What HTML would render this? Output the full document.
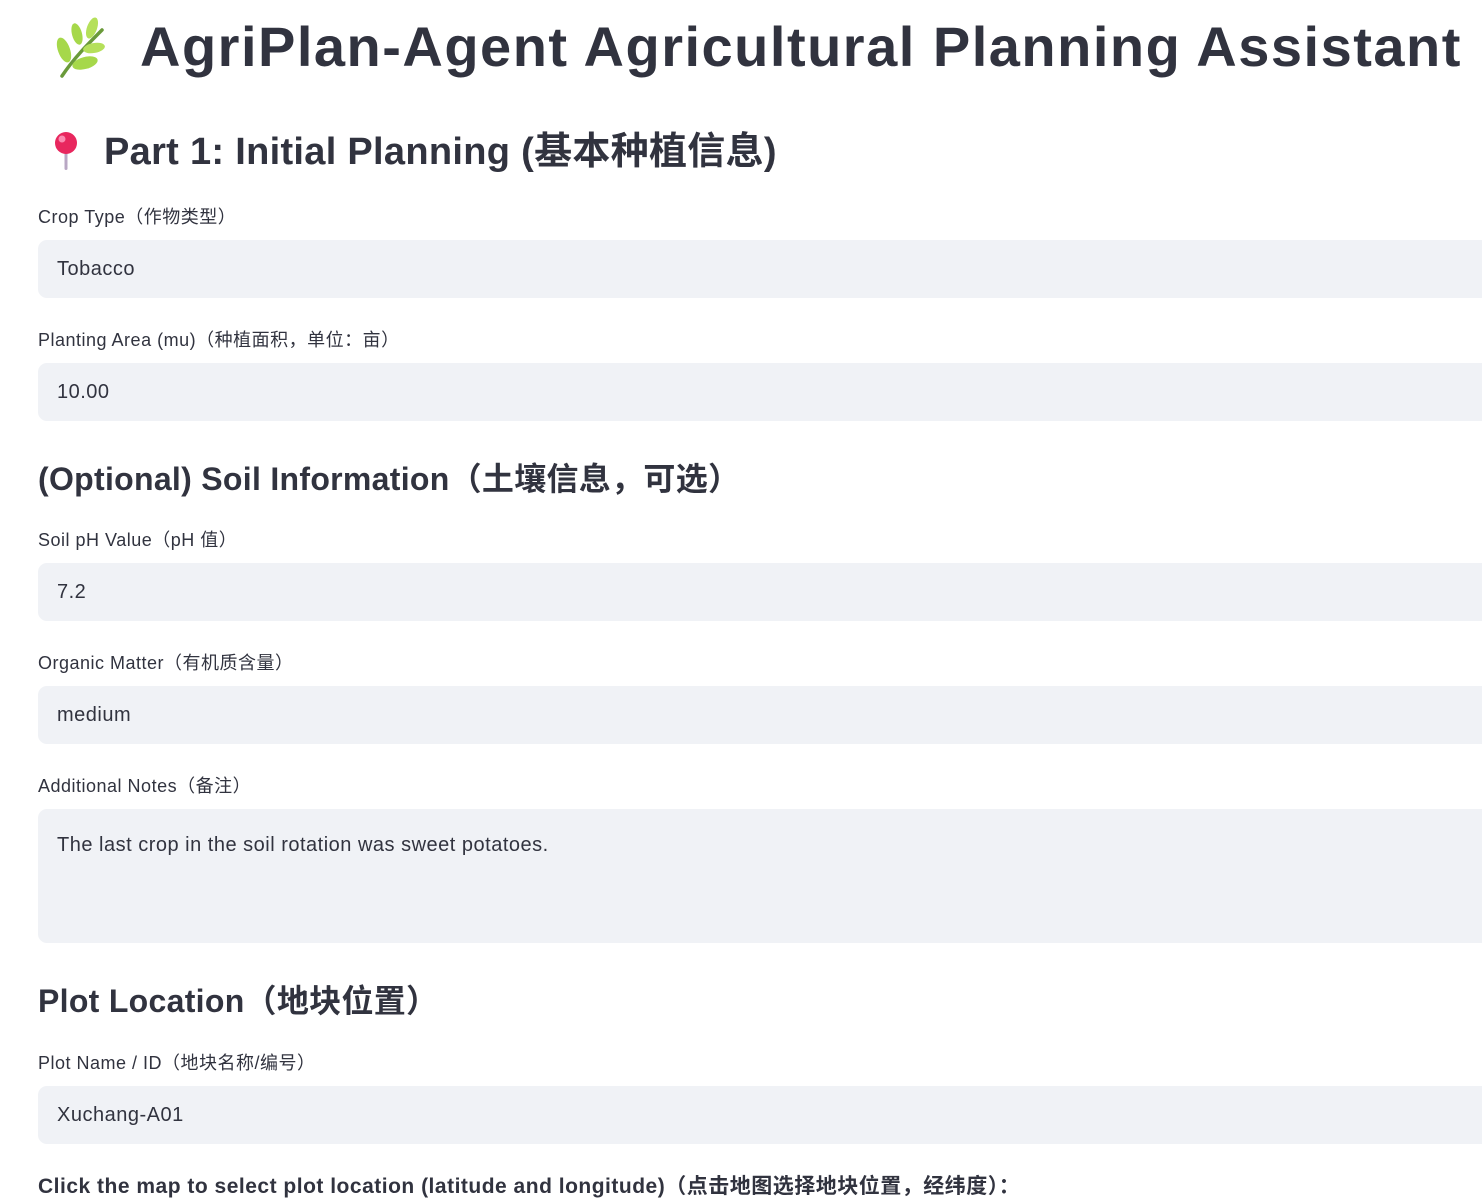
<!DOCTYPE html>
<html><head><meta charset="utf-8">
<style>
html,body{margin:0;padding:0;background:#fff;width:1482px;height:1200px;overflow:hidden;position:relative}
body{font-family:"Liberation Sans","Noto Sans CJK SC",sans-serif;color:#31333f}
.a{position:absolute;white-space:nowrap}
.t{left:140px;top:12px;font-size:56px;font-weight:bold;letter-spacing:1.5px;line-height:70px}
.h2{left:104px;top:127px;font-size:38px;font-weight:bold;line-height:50px;letter-spacing:0.3px}
.h3{left:38px;font-size:32px;font-weight:bold;line-height:40px;letter-spacing:0.3px}
.lb{left:38px;font-size:18px;line-height:24px;color:#31333f;letter-spacing:0.5px}
.in{left:38px;width:1460px;height:58px;background:#f0f2f6;border-radius:9px}
.in span{position:absolute;left:19px;top:17px;font-size:20px;line-height:24px;letter-spacing:0.5px}
.bt{left:38px;top:1173px;font-size:21px;font-weight:bold;line-height:28px;letter-spacing:0.5px}
</style></head><body>
<svg class="a" style="left:52px;top:14px" width="56" height="64" viewBox="0 0 56 64">
<path d="M10 62 C22 44 36 30 50 16" stroke="#6a9a3a" stroke-width="3.5" fill="none" stroke-linecap="round"/>
<ellipse cx="12" cy="36" rx="6" ry="13" transform="rotate(-20 12 36)" fill="#a6d84a"/>
<ellipse cx="25" cy="20" rx="5" ry="11" transform="rotate(-15 25 20)" fill="#a6d84a"/>
<ellipse cx="40" cy="14" rx="5" ry="11" transform="rotate(20 40 14)" fill="#b5e05a"/>
<ellipse cx="42" cy="34" rx="11" ry="5" transform="rotate(-10 42 34)" fill="#b5e05a"/>
<ellipse cx="33" cy="49" rx="13" ry="6" transform="rotate(-15 33 49)" fill="#a6d84a"/>
</svg>
<div class="a t">AgriPlan-Agent Agricultural Planning Assistant</div>
<svg class="a" style="left:50px;top:130px" width="32" height="42" viewBox="0 0 32 42">
<rect x="14.5" y="18" width="3" height="22" rx="1.5" fill="#b9a7c4"/>
<circle cx="16" cy="13" r="11" fill="#e8275e"/>
<circle cx="12" cy="9" r="3.5" fill="#fb8ab0"/>
</svg>
<div class="a h2">Part 1: Initial Planning (基本种植信息)</div>

<div class="a lb" style="top:205px">Crop Type（作物类型）</div>
<div class="a in" style="top:240px"><span>Tobacco</span></div>
<div class="a lb" style="top:328px">Planting Area (mu)（种植面积，单位：亩）</div>
<div class="a in" style="top:363px"><span>10.00</span></div>

<div class="a h3" style="top:459px">(Optional) Soil Information（土壤信息，可选）</div>
<div class="a lb" style="top:528px">Soil pH Value（pH 值）</div>
<div class="a in" style="top:563px"><span>7.2</span></div>
<div class="a lb" style="top:651px">Organic Matter（有机质含量）</div>
<div class="a in" style="top:686px"><span>medium</span></div>
<div class="a lb" style="top:774px">Additional Notes（备注）</div>
<div class="a in" style="top:809px;height:134px"><span style="top:24px">The last crop in the soil rotation was sweet potatoes.</span></div>

<div class="a h3" style="top:981px">Plot Location（地块位置）</div>
<div class="a lb" style="top:1051px">Plot Name / ID（地块名称/编号）</div>
<div class="a in" style="top:1086px"><span>Xuchang-A01</span></div>
<div class="a bt">Click the map to select plot location (latitude and longitude)（点击地图选择地块位置，经纬度）：</div>
</body></html>
